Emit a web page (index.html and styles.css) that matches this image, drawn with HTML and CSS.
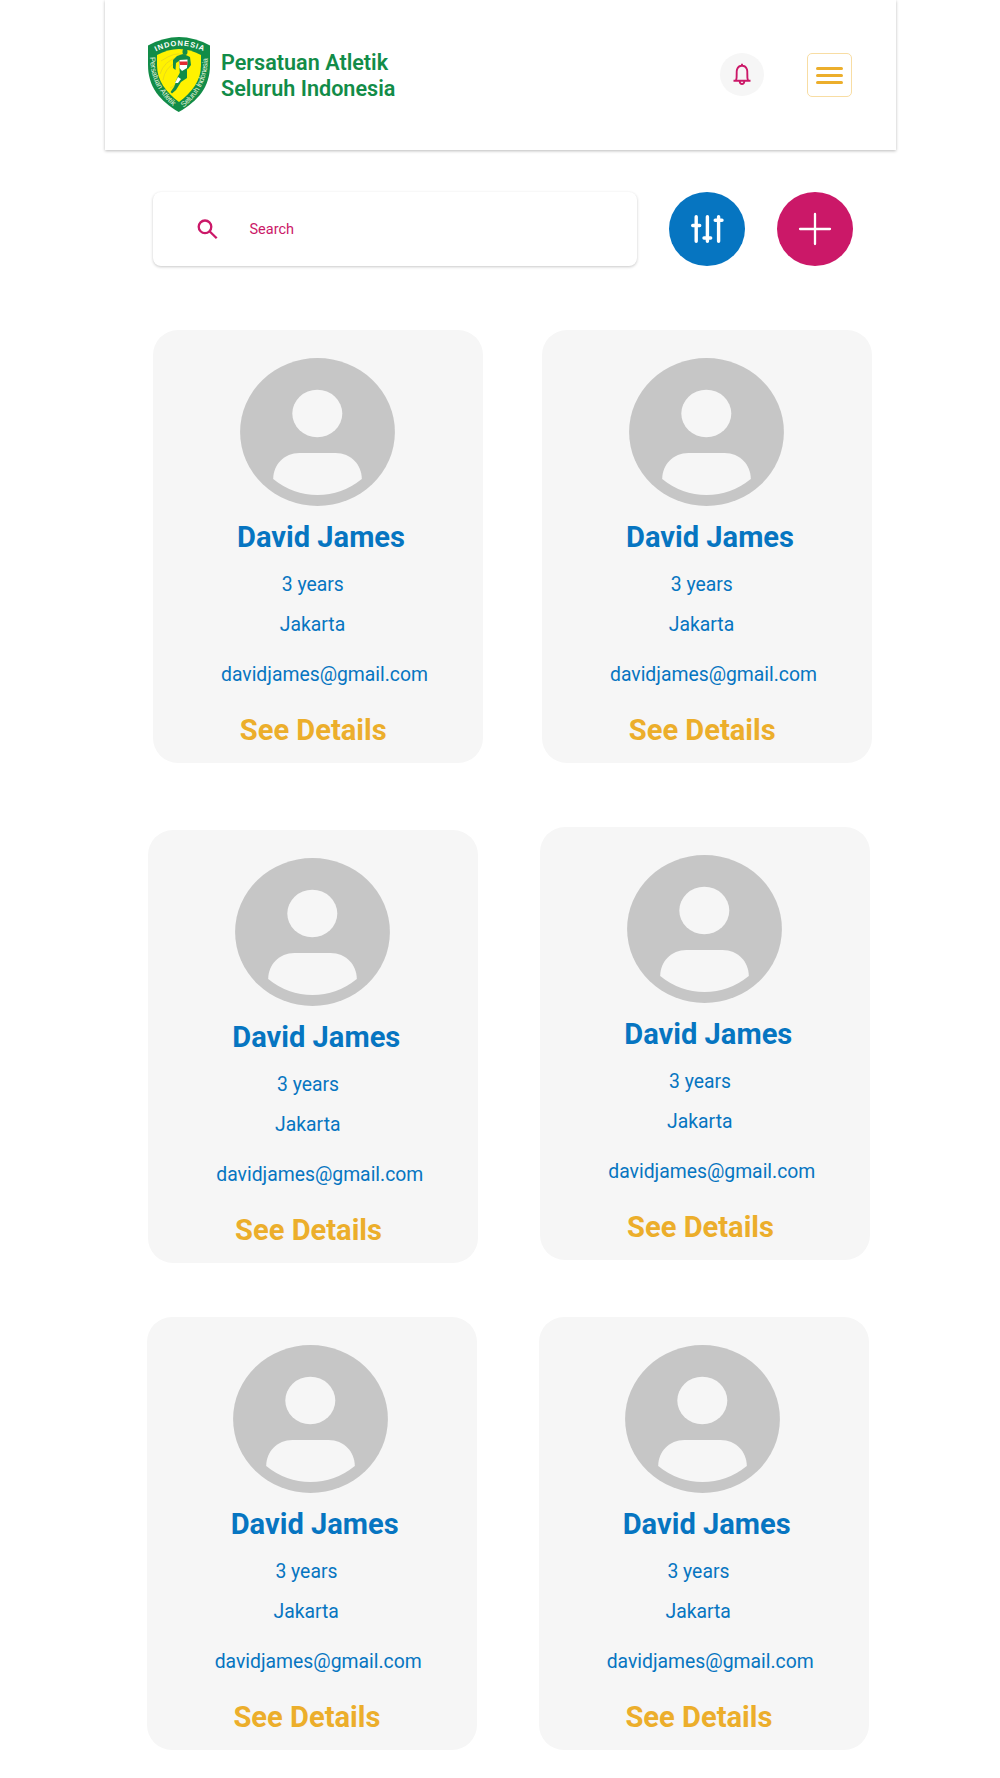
FILE: index.html
```html
<!DOCTYPE html>
<html lang="en">
  <head>
    <meta charset="utf-8">
    <title>Persatuan Atletik Seluruh Indonesia</title>
    <link rel="stylesheet" href="styles.css">
  </head>
  <body>
    <!-- shared avatar -->
    <svg class="defs" width="0" height="0">
      <symbol id="avatar" viewBox="0 0 155 148">
        <ellipse cx="77.5" cy="74" rx="77.4" ry="74" fill="#c6c6c6"/>
        <ellipse cx="77.3" cy="55.5" rx="25" ry="23.8" fill="#f6f6f6"/>
        <path d="M33.2 121C33.2 107 44 95 59.5 95H95.5C111 95 121.8 107 121.8 121Q102 137 77.5 137T33.2 121Z" fill="#f6f6f6"/>
      </symbol>
    </svg>
    <header class="header">
      <div class="brand">
        <svg class="logo" viewBox="0 0 62 75">
          <defs>
            <path id="arc-top" d="M8 14.5Q31 3 56 14.5"/>
            <path id="arc-left" d="M2 20C2.500 42 11 57 27 71"/>
            <path id="arc-right" d="M35.500 70.500C52 57 59.500 42 60 18.500"/>
          </defs>
          <path d="M0 8.500Q31-8.500 62 8.500V28C62 50 50 64 30.700 75C12 64 0 50 0 28Z" fill="#128c48"/>
          <path d="M9 18Q31 6 53 18V28C53 44 44 55 31 65C18 55 9 44 9 28Z" fill="#fff200"/>
          <g fill="none" stroke="#dcc928" stroke-width=".6">
            <path d="M13 24Q28 14 34 18M12 37Q16 24 30 20M15 43Q17 31 27 26M22 51Q29 48 31 42"/>
          </g>
          <ellipse cx="37" cy="14.800" rx="2.500" ry="3.200" fill="#128c48"/>
          <path d="M35 17L39 18.500L42 20L43 28L40 32L38.500 31L40.500 27L39 33L39 41L33 45L28 53L24 56.500L22.500 55L26 50L28 45L32 38L31.500 32L31 24L28 26L27.500 33L25 31L25 23L29 19Z" fill="#128c48"/>
          <path d="M31.500 23L39.500 22.500L39 31L34 34L31.500 31Z" fill="#fff"/>
          <path d="M31.500 24.500H39.500V28H32Z" fill="#e22b32"/>
          <path d="M33 34L38 35L35 40L31 45L27 46L30 39Z" fill="#128c48"/>
          <path d="M30 40L33 42L30 46L27 46Z" fill="#fff"/>
          <text class="logo-top"><textPath href="#arc-top" textLength="49">INDONESIA</textPath></text>
          <text class="logo-side"><textPath href="#arc-left" textLength="56">Persatuan Atletik</textPath></text>
          <text class="logo-side"><textPath href="#arc-right" textLength="57">Seluruh Indonesia</textPath></text>
        </svg>
        <h1 class="brand-name">Persatuan Atletik<br>Seluruh Indonesia</h1>
      </div>
      <div class="header-actions">
        <button class="bell">
          <svg width="18" height="23" viewBox="0 0 18 23" fill="none" stroke="#cb1868" stroke-width="1.9">
            <path d="M.5 17.800H17.500M3 17.500C4.500 14.500 3 9.500 4 6.500C5 3.600 7 2.700 9 2.700S13 3.600 14 6.500C15 9.500 13.500 14.500 15 17.500M6.700 18.500C7 21.800 11 21.800 11.300 18.500M9 .7V2.500"/>
          </svg>
        </button>
        <button class="menu">
          <span class="bar"></span>
          <span class="bar"></span>
          <span class="bar"></span>
        </button>
      </div>
    </header>
    <div class="toolbar">
      <div class="search">
        <svg class="search-icon" width="21" height="21" viewBox="0 0 21 21" fill="none" stroke="#cb1868" stroke-width="2.3">
          <circle cx="8" cy="7.800" r="6.300"/>
          <path d="M12.500 12.200L19.700 19.300"/>
        </svg>
        <span>Search</span>
      </div>
      <button class="round filter">
        <svg width="34" height="30" viewBox="0 0 34 30" fill="none" stroke="#fff" stroke-width="3.400" stroke-linecap="round">
          <path d="M6.200 2.700V27.300M2.700 11.500H9.700M17.400 2.700V27.300M14 24H20.700M28.600 2.700V27.300M25.200 6.300H32"/>
        </svg>
      </button>
      <button class="round add">
        <svg width="34" height="34" viewBox="0 0 34 34" fill="none" stroke="#fff" stroke-width="2.300" stroke-linecap="round">
          <path d="M17 2V32M2 17H32"/>
        </svg>
      </button>
    </div>
    <main class="athletes">
      <div class="row">
        <div class="card">
          <svg class="avatar"><use href="#avatar"/></svg>
          <h2 class="name">David James</h2>
          <p class="age">3 years</p>
          <p class="city">Jakarta</p>
          <p class="email">davidjames@gmail.com</p>
          <a class="details">See Details</a>
        </div>
        <div class="card">
          <svg class="avatar"><use href="#avatar"/></svg>
          <h2 class="name">David James</h2>
          <p class="age">3 years</p>
          <p class="city">Jakarta</p>
          <p class="email">davidjames@gmail.com</p>
          <a class="details">See Details</a>
        </div>
      </div>
      <div class="row row-second">
        <div class="card">
          <svg class="avatar"><use href="#avatar"/></svg>
          <h2 class="name">David James</h2>
          <p class="age">3 years</p>
          <p class="city">Jakarta</p>
          <p class="email">davidjames@gmail.com</p>
          <a class="details">See Details</a>
        </div>
        <div class="card">
          <svg class="avatar"><use href="#avatar"/></svg>
          <h2 class="name">David James</h2>
          <p class="age">3 years</p>
          <p class="city">Jakarta</p>
          <p class="email">davidjames@gmail.com</p>
          <a class="details">See Details</a>
        </div>
      </div>
      <div class="row row-third">
        <div class="card">
          <svg class="avatar"><use href="#avatar"/></svg>
          <h2 class="name">David James</h2>
          <p class="age">3 years</p>
          <p class="city">Jakarta</p>
          <p class="email">davidjames@gmail.com</p>
          <a class="details">See Details</a>
        </div>
        <div class="card">
          <svg class="avatar"><use href="#avatar"/></svg>
          <h2 class="name">David James</h2>
          <p class="age">3 years</p>
          <p class="city">Jakarta</p>
          <p class="email">davidjames@gmail.com</p>
          <a class="details">See Details</a>
        </div>
      </div>
    </main>
  </body>
</html>
```
FILE: styles.css
```css
* { box-sizing: border-box; }
html, body { margin: 0; padding: 0; }
body { height: 1778px; overflow: hidden; background: #fff; font-family: Roboto, sans-serif; }
h1, h2, p { margin: 0; }
button { padding: 0; border: none; cursor: pointer; }
.defs { display: block; }

.header {
  display: flex; justify-content: space-between; align-items: flex-start;
  width: 791px; height: 150px; margin-left: 105px; padding: 37px 44px 0 43px;
  background: #fff; box-shadow: 0 1px 3px rgba(0, 0, 0, .27);
}
.brand { display: flex; }
.logo { width: 62px; height: 75px; }
.logo-top { fill: #fff; font: bold 7.5px "Liberation Sans", sans-serif; }
.logo-side { fill: #e4f2dc; font: 7.6px "Liberation Sans", sans-serif; }
.brand-name { margin: 13px 0 0 11px; color: #128c48; font-size: 21.6px; font-weight: 600; line-height: 26px; }
.header-actions { display: flex; margin-top: 16px; }
.bell {
  display: flex; justify-content: center; align-items: center;
  width: 44px; height: 43px; border-radius: 50%; background: #f6f6f6;
}
.menu {
  display: flex; flex-direction: column; justify-content: center; align-items: center; gap: 4px;
  width: 45px; height: 44px; margin-left: 43px;
  border: 1px solid #f8dda3; border-radius: 5px; background: #fff;
}
.bar { width: 27px; height: 3px; border-radius: 2px; background: #ecae2b; }

.toolbar { display: flex; height: 75px; margin: 42px 0 0 153px; }
.search {
  display: flex; align-items: center; width: 484px; height: 74px; padding: 1px 0 0 43.5px;
  border-radius: 8px; background: #fff; box-shadow: 0 1px 3px rgba(0, 0, 0, .22);
  color: #cb1868; font-size: 14.5px;
}
.search-icon { margin-right: 32px; }
.round { display: flex; justify-content: center; align-items: center; width: 76px; height: 74px; border-radius: 50%; }
.filter { margin-left: 32px; background: #0675c1; }
.add { margin-left: 32px; background: #cb1868; }

.athletes { padding-top: 63px; }
.row { display: flex; align-items: flex-start; gap: 59px; height: 500px; padding-left: 153px; }
.row-second { height: 487px; gap: 62px; padding-left: 148.3px; }
.row-second .card:last-child { margin-top: -3px; }
.row-third { height: 461px; gap: 62px; padding-left: 146.7px; }
.card {
  display: flex; flex-direction: column; align-items: center;
  width: 330px; height: 432.5px; padding-top: 28px; border-radius: 25px; background: #f6f6f6;
}
.avatar { width: 155px; height: 148px; margin-right: 1.5px; }
.name { margin: 13px 0 0 6px; color: #0675c1; font-size: 29.1px; line-height: 36px; }
.age, .city, .email { color: #0675c1; font-size: 19.35px; line-height: 24px; }
.age { margin: 18px 10.5px 0 0; }
.city { margin: 16px 11px 0 0; }
.email { margin: 26px 0 0 13px; }
.details { margin: 25px 9.5px 0 0; color: #ecae2b; font-size: 29.1px; font-weight: bold; line-height: 36px; }
```
